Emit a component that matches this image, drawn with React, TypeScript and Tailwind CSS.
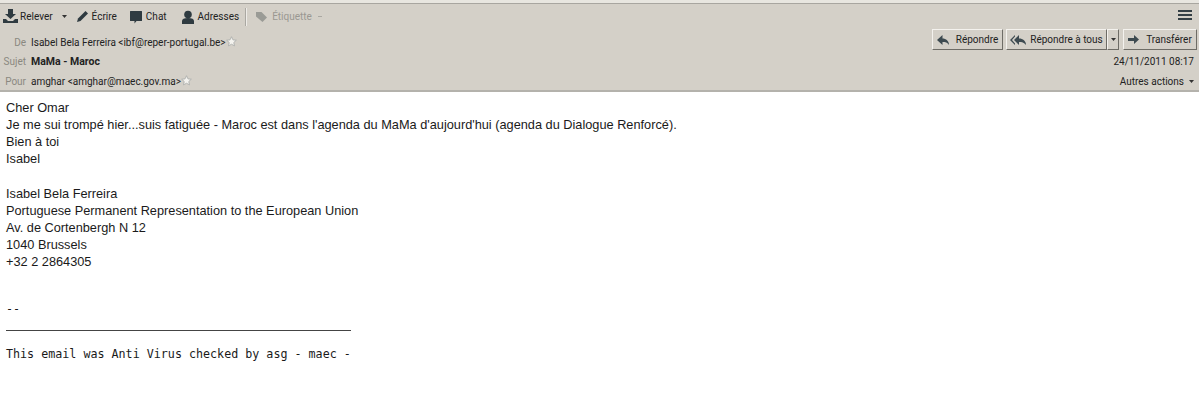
import React from "react";

const Star = () => (
  <svg width="11" height="11" viewBox="0 0 12 12" className="shrink-0 -mt-[2px]">
    <path d="M6 .8l1.6 3.4 3.700.4-2.800 2.500.8 3.700L6 9l-3.300 1.800.8-3.700L.7 4.600l3.700-.4z" fill="#f4f3ef" stroke="#aeb0ae" strokeWidth="1" />
  </svg>
);

const Tool = ({ icon, label, className = "" }: { icon: React.ReactNode; label: string; className?: string }) => (
  <div className={`flex items-center gap-[2px] ${className}`}>
    {icon}
    <span>{label}</span>
  </div>
);

const ReplyIcon = ({ double }: { double?: boolean }) => (
  <svg width={double ? 16 : 12} height="10" viewBox={double ? "0 0 16 10" : "0 0 12 10"} className="shrink-0">
    {double && <path d="M5 0v1.500L2 5l3 3.500V10L0 5z" fill="#3d4a50" />}
    <path d={double ? "M9 0L4 5l5 5V7c3 0 5 .5 7 3 0-4-3-6.500-7-6.500z" : "M5.500 0L0 5l5.500 5V7c3 0 5 .5 6.500 3 0-4-3-6.500-6.500-6.500z"} fill="#3d4a50" />
  </svg>
);

const Btn = ({ children, className = "" }: { children: React.ReactNode; className?: string }) => (
  <div className={`h-[21px] flex items-center justify-center whitespace-nowrap bg-[#d4d0c8] border border-t-[#f4f2ee] border-l-[#f4f2ee] border-r-[#6e6c66] border-b-[#6e6c66] ${className}`}>
    {children}
  </div>
);

const Caret = () => (
  <svg width="5" height="3" viewBox="0 0 5 3" className="shrink-0"><path d="M0 0h5L2.500 3z" fill="#333" /></svg>
);

export default function App() {
  return (
    <div className="w-[1199px] h-[415px] bg-white overflow-hidden text-black font-['Liberation_Sans',sans-serif]">
      <header className="h-[92px] bg-[#d4d0c8] border-t-[3px] border-t-[#e8e6e0] border-b-2 border-b-[#b4b2ac] text-[10px] text-[#222] font-['Roboto',sans-serif] whitespace-nowrap">
        <div className="h-[26px] flex items-center border-t border-t-[#a8a6a0]">
          <div className="flex items-center pl-[3px]">
            <Tool
              label="Relever"
              icon={
                <svg width="15" height="15" viewBox="0 0 15 15" className="shrink-0">
                  <path d="M5 0h5v5h3L7.500 10 2 5h3z" fill="#2f3b41" />
                  <path d="M0 10h3l2 2h5l2-2h3v4H0z" fill="#2f3b41" />
                </svg>
              }
            />
            <div className="ml-[9px]"><Caret /></div>
            <Tool
              className="ml-[9px]"
              label="Écrire"
              icon={
                <svg width="13" height="13" viewBox="0 0 13 13" className="shrink-0 mr-[1px]">
                  <path d="M9.500 1l2.500 2.500L4.500 11 1 12l1-3.500z" fill="#2f3b41" />
                </svg>
              }
            />
            <Tool
              className="ml-[12px]"
              label="Chat"
              icon={
                <svg width="14" height="14" viewBox="0 0 14 14" className="shrink-0 mr-[1px]">
                  <path d="M1 1.500Q1 1 1.500 1h11q.5 0 .5.5v9q0 .5-.5.5H7.500L5.500 13.500V11H1.500Q1 11 1 10.500z" fill="#2f3b41" />
                </svg>
              }
            />
            <Tool
              className="ml-[14px]"
              label="Adresses"
              icon={
                <svg width="14" height="14" viewBox="0 0 14 14" className="shrink-0 mr-[1px]">
                  <circle cx="7" cy="4.500" r="3.800" fill="#2f3b41" />
                  <path d="M1 14v-3c0-2 2-3 6-3s6 1 6 3v3z" fill="#2f3b41" />
                </svg>
              }
            />
            <div className="ml-[6px] w-[2px] h-[18px] bg-[#aaa8a2] border-r border-r-[#eeece8]" />
            <Tool
              className="ml-[9px] text-[#9a9892]"
              label="Étiquette"
              icon={
                <svg width="12" height="12" viewBox="0 0 12 12" className="shrink-0 mr-[2px]">
                  <path d="M0 1h5.500L11 6.500 6.500 11 0 5.500z" fill="#9a9b96" />
                </svg>
              }
            />
            <div className="ml-[6px] w-[4px] h-[1px] bg-[#aaa8a2]" />
          </div>
          <div className="ml-auto pr-[7px] flex flex-col gap-[2px] -mt-[4px]">
            <div className="w-[14px] h-[2px] bg-[#343f45]" />
            <div className="w-[14px] h-[2px] bg-[#343f45]" />
            <div className="w-[14px] h-[2px] bg-[#343f45]" />
          </div>
        </div>

        <div className="flex items-start justify-between">
          <div className="pt-[4px]">
            <div className="h-[19px] flex items-center">
              <span className="w-[26px] text-right text-[#8a8880] mr-[5px]">De</span>
              <span>Isabel Bela Ferreira &lt;ibf@reper-portugal.be&gt;</span>
              <Star />
            </div>
            <div className="h-[19px] flex items-center">
              <span className="w-[26px] text-right text-[#8a8880] mr-[5px]">Sujet</span>
              <span className="font-bold text-[10.500px]">MaMa - Maroc</span>
            </div>
            <div className="h-[21px] flex items-center">
              <span className="w-[26px] text-right text-[#8a8880] mr-[5px]">Pour</span>
              <span>amghar &lt;amghar@maec.gov.ma&gt;</span>
              <Star />
            </div>
          </div>
          <div className="flex flex-col items-end pr-[2px]">
            <div className="flex items-center">
              <Btn className="w-[71px] gap-[7px]"><ReplyIcon /><span>Répondre</span></Btn>
              <Btn className="w-[101px] ml-[3px] gap-[4px]"><ReplyIcon double /><span>Répondre à tous</span></Btn>
              <Btn className="w-[12px]"><Caret /></Btn>
              <Btn className="w-[74px] ml-[4px] gap-[7px]">
                <svg width="11" height="9" viewBox="0 0 11 9" className="shrink-0"><path d="M0 3h6V0l5 4.500L6 9V6H0z" fill="#3d4a50" /></svg>
                <span>Transférer</span>
              </Btn>
            </div>
            <div className="h-[20px] mt-[1px] flex items-center pr-[3px]">24/11/2011 08:17</div>
            <div className="h-[20px] flex items-center gap-[5px] pr-[3px]">
              <span>Autres actions</span>
              <Caret />
            </div>
          </div>
        </div>
      </header>

      <main className="pl-[6px] pt-[7px] text-[12.750px] leading-[17px] text-[#1a1a1a]">
        <p>Cher Omar</p>
        <p>Je me sui trompé hier...suis fatiguée - Maroc est dans l'agenda du MaMa d'aujourd'hui (agenda du Dialogue Renforcé).</p>
        <p>Bien à toi</p>
        <p>Isabel</p>
        <p className="mt-[18px]">Isabel Bela Ferreira</p>
        <p>Portuguese Permanent Representation to the European Union</p>
        <p>Av. de Cortenbergh N 12</p>
        <p>1040 Brussels</p>
        <p>+32 2 2864305</p>
        <div className="mt-[31px] font-['DejaVu_Sans_Mono',monospace] text-[11.700px] leading-[17px]">--</div>
        <div className="w-[345px] h-[1px] bg-[#444] mt-[12px]" />
        <div className="mt-[15px] font-['DejaVu_Sans_Mono',monospace] text-[11.700px] leading-[17px]">This email was Anti Virus checked by asg - maec -</div>
      </main>
    </div>
  );
}
